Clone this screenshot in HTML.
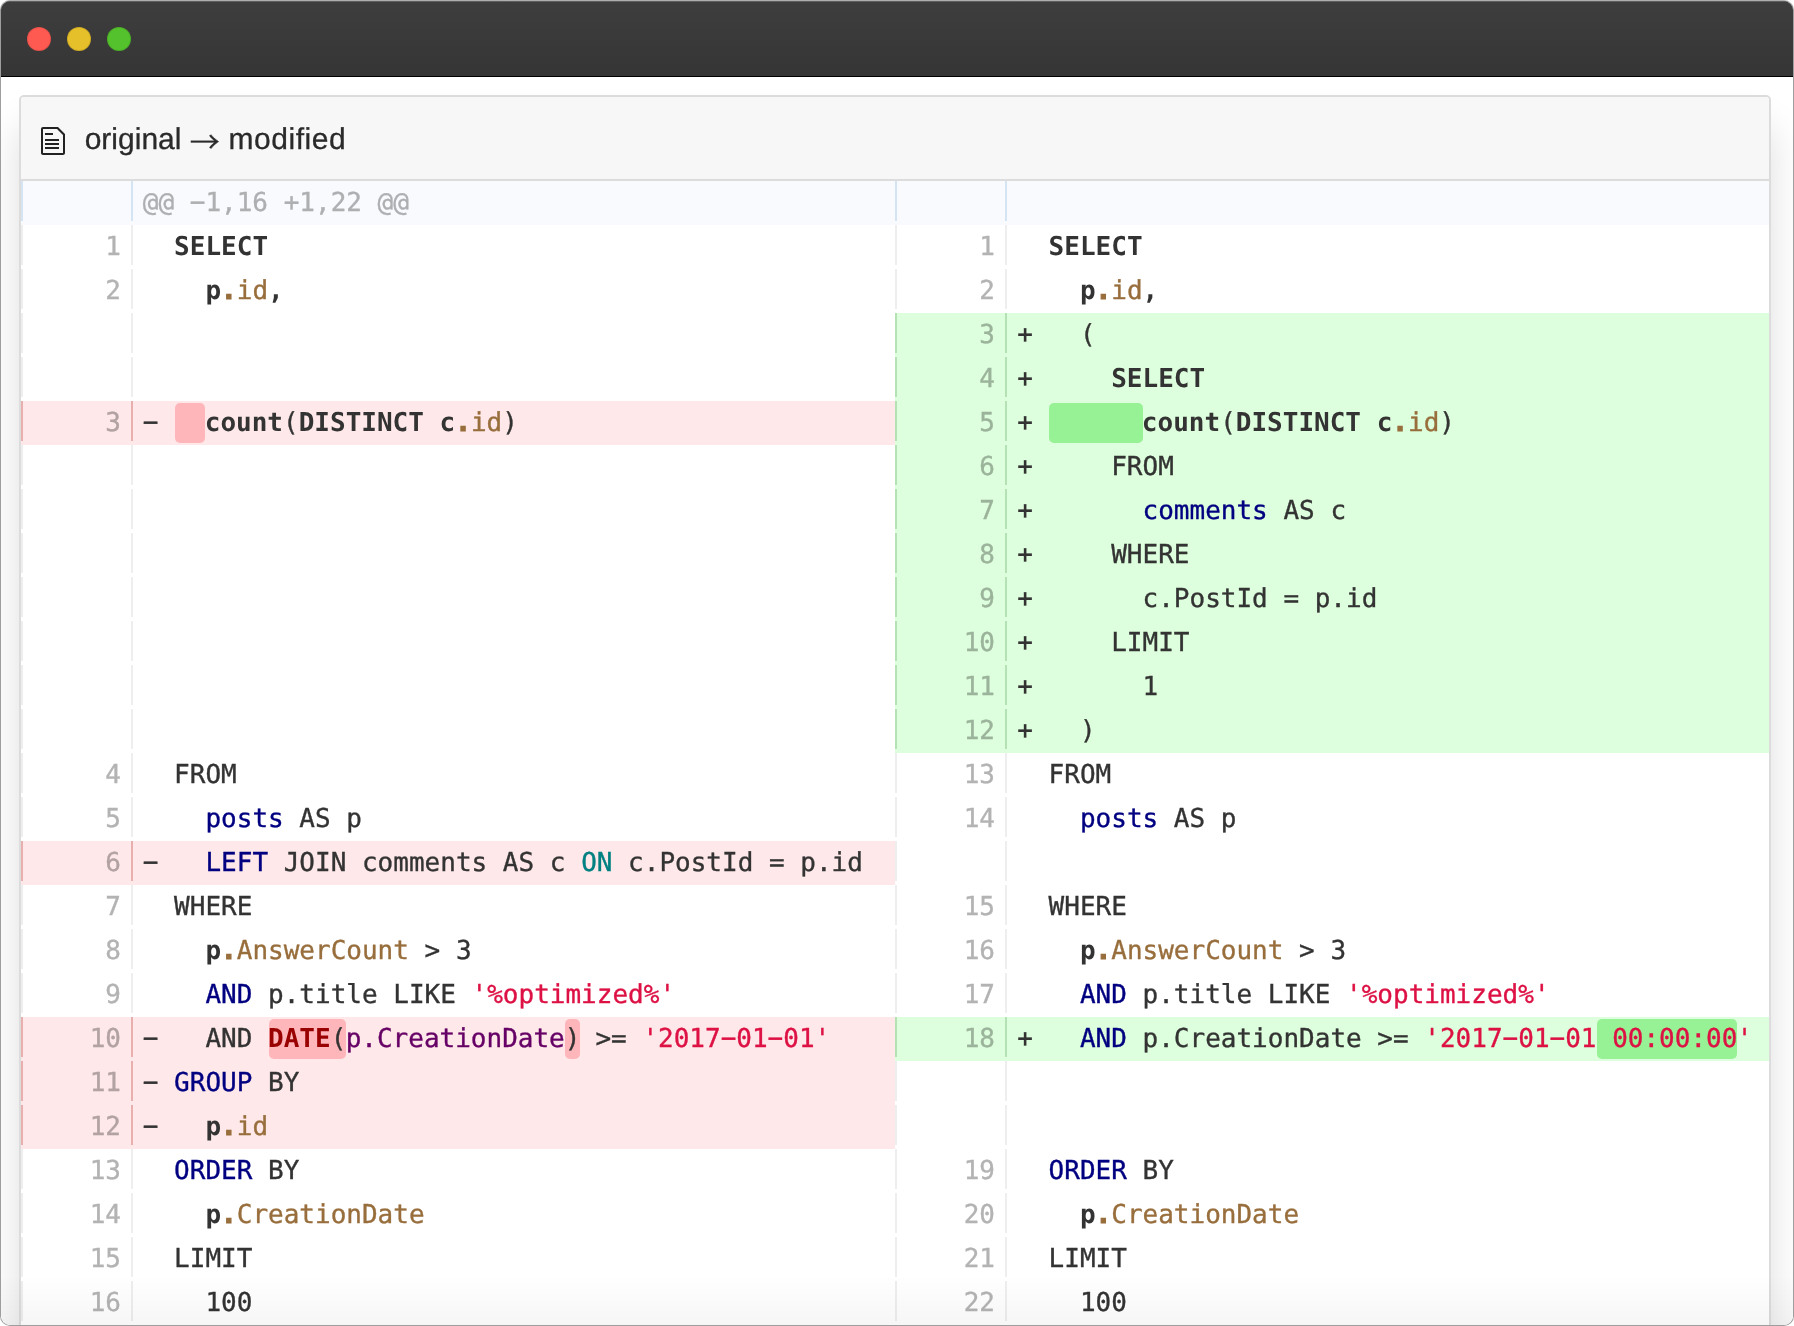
<!DOCTYPE html>
<html lang="en">
<head>
<meta charset="utf-8">
<title>original → modified</title>
<style>
html,body{margin:0;padding:0;background:#fff;}
body{text-rendering:geometricPrecision;width:1794px;height:1326px;overflow:hidden;position:relative;}
.window{will-change:transform;position:absolute;left:0;top:0;width:1794px;height:1326px;box-sizing:border-box;border:1px solid #9e9e9e;border-top-color:#afafaf;border-radius:10px;overflow:hidden;background:#fff;}
.titlebar{position:absolute;left:0;top:0;width:1792px;height:75px;background:linear-gradient(#3e3e3e,#353535);border-bottom:1px solid #000;box-shadow:inset 0 1px 0 #5e5e5e;}
.dot{position:absolute;top:26px;width:24px;height:24px;border-radius:50%;box-shadow:inset 0 0 0 1px rgba(0,0,0,.1);}
.dot.r{left:26px;background:#fe5a52;}
.dot.y{left:66px;background:#e6c02a;}
.dot.g{left:106px;background:#54c22c;}
.content{position:absolute;left:0;top:76px;width:1792px;height:1249px;background:#fff;overflow:hidden;}
.card{position:absolute;left:18px;top:18px;width:1752px;height:1400px;box-sizing:border-box;border:2px solid #dcdcdc;border-radius:5px;background:#fff;overflow:hidden;box-shadow:0 32px 38px rgba(0,0,0,.133);}
.head{position:absolute;left:0;top:0;width:1748px;height:82px;background:#f7f7f7;border-bottom:2px solid #dcdcdc;}
.icon{position:absolute;left:20px;top:28px;fill:#222;}
.fname{position:absolute;left:63.7px;top:25px;font:30px/36px "Liberation Sans",sans-serif;color:#2a2a2a;-webkit-text-stroke:.3px;white-space:pre;}
.body{position:absolute;left:0;top:84px;width:1748px;}
.side{position:absolute;top:0;width:874px;}
.side.left{left:0;}
.side.right{left:874px;}
.row{position:relative;height:44px;width:874px;font:26px/44px "DejaVu Sans Mono","Liberation Mono",monospace;color:#333;-webkit-text-stroke:.35px;}
.ln{position:absolute;left:0;top:0;width:112px;height:40px;box-sizing:border-box;border-left:2px solid #eee;border-right:2px solid #eee;color:#b3b3b3;text-align:right;padding-right:10px;line-height:44px;overflow:visible;}
.code{position:absolute;left:121.8px;top:0;height:44px;white-space:pre;}
.side.right .code{left:122.3px;}
.row.info{background:#f8fafd;color:#aeafb1;}
.row.info .ln{border-color:#d5e4f2;background:#f8fafd;}
.row.del{background:#fee8e9;}
.row.del .ln{border-color:#e9aeae;color:#b2a2a3;}
.row.ins{background:#dfd;}
.row.ins .ln{border-color:#b4e2b4;color:#9bb39b;}
del,ins{text-decoration:none;display:inline-block;height:40px;line-height:40px;vertical-align:top;margin:2px -.7px 0 .7px;text-indent:-.7px;border-radius:5px;}
del{background:#ffb6ba;}
ins{background:#97f295;}
.b{font-weight:bold;-webkit-text-stroke:0;}
.br{color:#986e3c;}
.b.br{-webkit-text-stroke:1.2px;}
.nv{color:#000080;}
.tl{color:#008080;}
.st{color:#dd1144;}
.pu{color:#660066;}
.dr{color:#990000;}
.arr{font-family:"Noto Sans CJK JP","DejaVu Sans",sans-serif;font-weight:350;display:inline-block;line-height:36px;vertical-align:top;}
.mod{letter-spacing:.55px;margin-left:.4px;}
.fade{position:absolute;left:0;bottom:0;width:1792px;height:50px;background:linear-gradient(rgba(0,0,0,0),rgba(0,0,0,.035));}
</style>
</head>
<body>
<div class="window">
  <div class="titlebar"><i class="dot r"></i><i class="dot y"></i><i class="dot g"></i></div>
  <div class="content">
    <div class="card">
      <div class="head">
        <svg class="icon" width="24" height="32" viewBox="0 0 12 16"><path d="M6 5H2V4h4v1zM2 8h7V7H2v1zm0 2h7V9H2v1zm0 2h7v-1H2v1zm10-7.5V14c0 .55-.45 1-1 1H1c-.55 0-1-.45-1-1V2c0-.55.45-1 1-1h7.5L12 4.5zM11 5L8 2H1v12h10V5z"/></svg>
        <span class="fname">original <span class="arr">→</span> <span class="mod">modified</span></span>
      </div>
      <div class="body">
        <div class="side left">
<div class="row info"><div class="ln"></div><div class="code">@@ −1,16 +1,22 @@</div></div>
<div class="row ctx"><div class="ln">1</div><div class="code">  <span class="b">SELECT</span></div></div>
<div class="row ctx"><div class="ln">2</div><div class="code">    <span class="b">p</span><span class="b br">.</span><span class="br">id</span><span class="b">,</span></div></div>
<div class="row empty"><div class="ln"></div><div class="code">  </div></div>
<div class="row empty"><div class="ln"></div><div class="code">  </div></div>
<div class="row del"><div class="ln">3</div><div class="code">− <del>  </del><span class="b">count</span>(<span class="b">DISTINCT c</span><span class="b br">.</span><span class="br">id</span>)</div></div>
<div class="row empty"><div class="ln"></div><div class="code">  </div></div>
<div class="row empty"><div class="ln"></div><div class="code">  </div></div>
<div class="row empty"><div class="ln"></div><div class="code">  </div></div>
<div class="row empty"><div class="ln"></div><div class="code">  </div></div>
<div class="row empty"><div class="ln"></div><div class="code">  </div></div>
<div class="row empty"><div class="ln"></div><div class="code">  </div></div>
<div class="row empty"><div class="ln"></div><div class="code">  </div></div>
<div class="row ctx"><div class="ln">4</div><div class="code">  FROM</div></div>
<div class="row ctx"><div class="ln">5</div><div class="code">    <span class="nv">posts</span> AS p</div></div>
<div class="row del"><div class="ln">6</div><div class="code">−   <span class="nv">LEFT</span> JOIN comments AS c <span class="tl">ON</span> c.PostId = p.id</div></div>
<div class="row ctx"><div class="ln">7</div><div class="code">  WHERE</div></div>
<div class="row ctx"><div class="ln">8</div><div class="code">    <span class="b">p</span><span class="b br">.</span><span class="br">AnswerCount</span> &gt; 3</div></div>
<div class="row ctx"><div class="ln">9</div><div class="code">    <span class="nv">AND</span> p.title LIKE <span class="st">'%optimized%'</span></div></div>
<div class="row del"><div class="ln">10</div><div class="code">−   AND <del><span class="b dr">DATE</span>(</del><span class="pu">p.CreationDate</span><del>)</del> &gt;= <span class="st">'2017−01−01'</span></div></div>
<div class="row del"><div class="ln">11</div><div class="code">− <span class="nv">GROUP</span> BY</div></div>
<div class="row del"><div class="ln">12</div><div class="code">−   <span class="b">p</span><span class="b br">.</span><span class="br">id</span></div></div>
<div class="row ctx"><div class="ln">13</div><div class="code">  <span class="nv">ORDER</span> BY</div></div>
<div class="row ctx"><div class="ln">14</div><div class="code">    <span class="b">p</span><span class="b br">.</span><span class="br">CreationDate</span></div></div>
<div class="row ctx"><div class="ln">15</div><div class="code">  LIMIT</div></div>
<div class="row ctx"><div class="ln">16</div><div class="code">    100</div></div>
        </div>
        <div class="side right">
<div class="row info"><div class="ln"></div><div class="code"></div></div>
<div class="row ctx"><div class="ln">1</div><div class="code">  <span class="b">SELECT</span></div></div>
<div class="row ctx"><div class="ln">2</div><div class="code">    <span class="b">p</span><span class="b br">.</span><span class="br">id</span><span class="b">,</span></div></div>
<div class="row ins"><div class="ln">3</div><div class="code">+   (</div></div>
<div class="row ins"><div class="ln">4</div><div class="code">+     <span class="b">SELECT</span></div></div>
<div class="row ins"><div class="ln">5</div><div class="code">+ <ins>      </ins><span class="b">count</span>(<span class="b">DISTINCT c</span><span class="b br">.</span><span class="br">id</span>)</div></div>
<div class="row ins"><div class="ln">6</div><div class="code">+     FROM</div></div>
<div class="row ins"><div class="ln">7</div><div class="code">+       <span class="nv">comments</span> AS c</div></div>
<div class="row ins"><div class="ln">8</div><div class="code">+     WHERE</div></div>
<div class="row ins"><div class="ln">9</div><div class="code">+       c.PostId = p.id</div></div>
<div class="row ins"><div class="ln">10</div><div class="code">+     LIMIT</div></div>
<div class="row ins"><div class="ln">11</div><div class="code">+       1</div></div>
<div class="row ins"><div class="ln">12</div><div class="code">+   )</div></div>
<div class="row ctx"><div class="ln">13</div><div class="code">  FROM</div></div>
<div class="row ctx"><div class="ln">14</div><div class="code">    <span class="nv">posts</span> AS p</div></div>
<div class="row empty"><div class="ln"></div><div class="code">  </div></div>
<div class="row ctx"><div class="ln">15</div><div class="code">  WHERE</div></div>
<div class="row ctx"><div class="ln">16</div><div class="code">    <span class="b">p</span><span class="b br">.</span><span class="br">AnswerCount</span> &gt; 3</div></div>
<div class="row ctx"><div class="ln">17</div><div class="code">    <span class="nv">AND</span> p.title LIKE <span class="st">'%optimized%'</span></div></div>
<div class="row ins"><div class="ln">18</div><div class="code">+   <span class="nv">AND</span> p.CreationDate &gt;= <span class="st">'2017−01−01</span><ins><span class="st"> 00:00:00</span></ins><span class="st">'</span></div></div>
<div class="row empty"><div class="ln"></div><div class="code">  </div></div>
<div class="row empty"><div class="ln"></div><div class="code">  </div></div>
<div class="row ctx"><div class="ln">19</div><div class="code">  <span class="nv">ORDER</span> BY</div></div>
<div class="row ctx"><div class="ln">20</div><div class="code">    <span class="b">p</span><span class="b br">.</span><span class="br">CreationDate</span></div></div>
<div class="row ctx"><div class="ln">21</div><div class="code">  LIMIT</div></div>
<div class="row ctx"><div class="ln">22</div><div class="code">    100</div></div>
        </div>
      </div>
    </div>
  </div>
  <div class="fade"></div>
</div>
</body>
</html>
